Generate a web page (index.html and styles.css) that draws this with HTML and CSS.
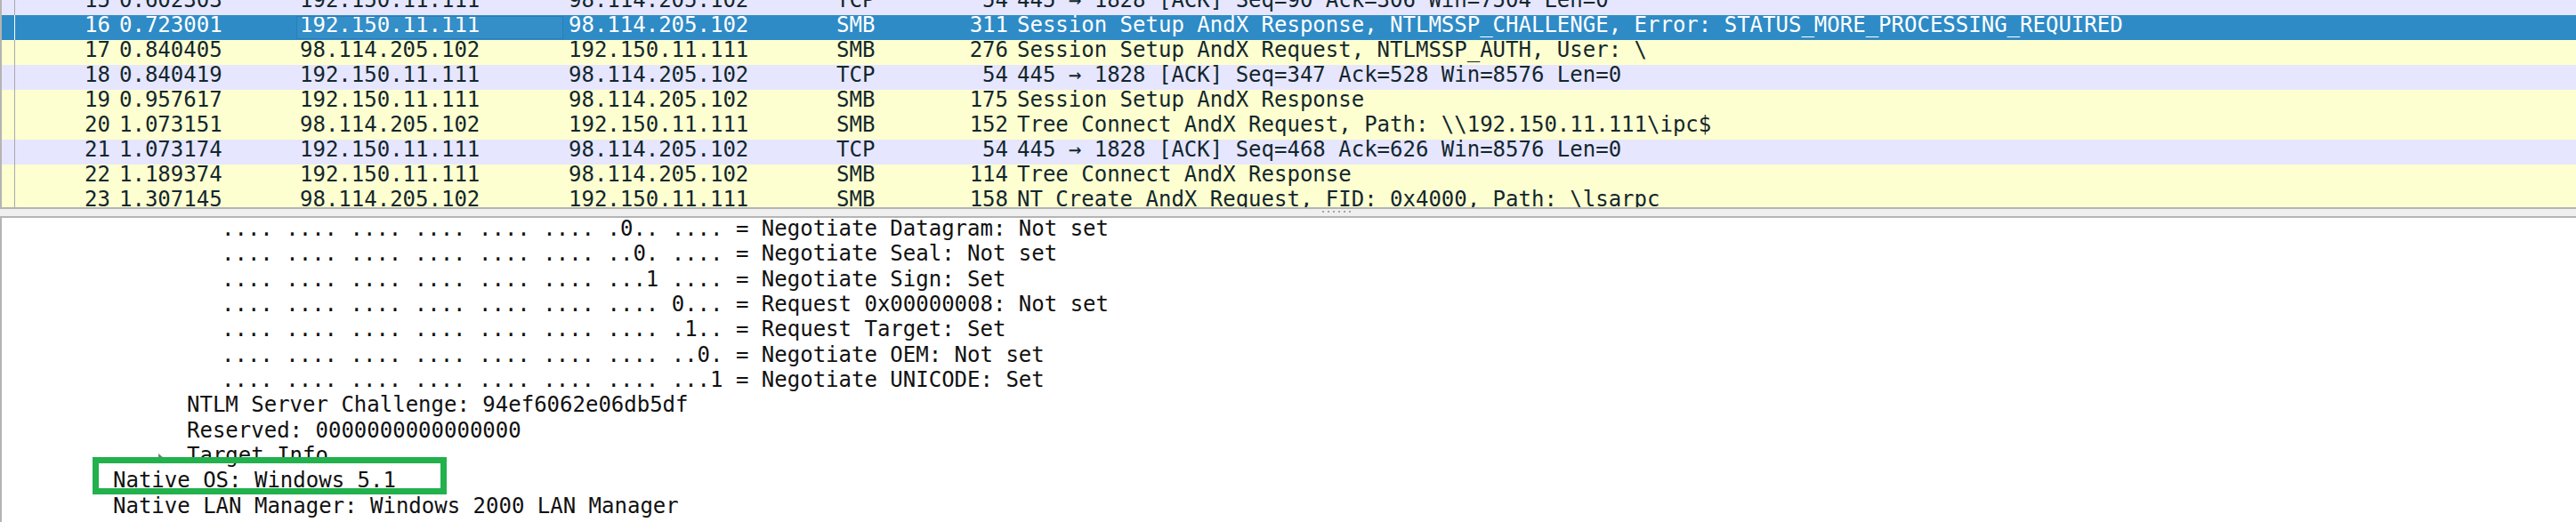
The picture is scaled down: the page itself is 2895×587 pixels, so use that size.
FILE: index.html
```html
<!DOCTYPE html>
<html>
<head>
<meta charset="utf-8">
<link rel="stylesheet" href="styles.css">
</head>
<body>
<div class="app">
  <div class="plist">
    <div class="rows">
      <div class="row tcp"><div class="c ind"></div><div class="c no">15</div><div class="c time">0.602303</div><div class="c src">192.150.11.111</div><div class="c dst">98.114.205.102</div><div class="c proto">TCP</div><div class="c len">54</div><div class="c info">445 → 1828 [ACK] Seq=90 Ack=306 Win=7504 Len=0</div></div>
      <div class="row sel"><div class="c ind"></div><div class="c no">16</div><div class="c time">0.723001</div><div class="c src focus">192.150.11.111</div><div class="c dst">98.114.205.102</div><div class="c proto">SMB</div><div class="c len">311</div><div class="c info">Session Setup AndX Response, NTLMSSP_CHALLENGE, Error: STATUS_MORE_PROCESSING_REQUIRED</div></div>
      <div class="row smb"><div class="c ind"></div><div class="c no">17</div><div class="c time">0.840405</div><div class="c src">98.114.205.102</div><div class="c dst">192.150.11.111</div><div class="c proto">SMB</div><div class="c len">276</div><div class="c info">Session Setup AndX Request, NTLMSSP_AUTH, User: \</div></div>
      <div class="row tcp"><div class="c ind"></div><div class="c no">18</div><div class="c time">0.840419</div><div class="c src">192.150.11.111</div><div class="c dst">98.114.205.102</div><div class="c proto">TCP</div><div class="c len">54</div><div class="c info">445 → 1828 [ACK] Seq=347 Ack=528 Win=8576 Len=0</div></div>
      <div class="row smb"><div class="c ind"></div><div class="c no">19</div><div class="c time">0.957617</div><div class="c src">192.150.11.111</div><div class="c dst">98.114.205.102</div><div class="c proto">SMB</div><div class="c len">175</div><div class="c info">Session Setup AndX Response</div></div>
      <div class="row smb"><div class="c ind"></div><div class="c no">20</div><div class="c time">1.073151</div><div class="c src">98.114.205.102</div><div class="c dst">192.150.11.111</div><div class="c proto">SMB</div><div class="c len">152</div><div class="c info">Tree Connect AndX Request, Path: \\192.150.11.111\ipc$</div></div>
      <div class="row tcp"><div class="c ind"></div><div class="c no">21</div><div class="c time">1.073174</div><div class="c src">192.150.11.111</div><div class="c dst">98.114.205.102</div><div class="c proto">TCP</div><div class="c len">54</div><div class="c info">445 → 1828 [ACK] Seq=468 Ack=626 Win=8576 Len=0</div></div>
      <div class="row smb"><div class="c ind"></div><div class="c no">22</div><div class="c time">1.189374</div><div class="c src">192.150.11.111</div><div class="c dst">98.114.205.102</div><div class="c proto">SMB</div><div class="c len">114</div><div class="c info">Tree Connect AndX Response</div></div>
      <div class="row smb"><div class="c ind"></div><div class="c no">23</div><div class="c time">1.307145</div><div class="c src">98.114.205.102</div><div class="c dst">192.150.11.111</div><div class="c proto">SMB</div><div class="c len">158</div><div class="c info">NT Create AndX Request, FID: 0x4000, Path: \lsarpc</div></div>
    </div>
  </div>
  <div class="splitter"><span class="grip"></span></div>
  <div class="details">
    <div class="tree">
      <div class="ln l3">.... .... .... .... .... .... .0.. .... = Negotiate Datagram: Not set</div>
      <div class="ln l3">.... .... .... .... .... .... ..0. .... = Negotiate Seal: Not set</div>
      <div class="ln l3">.... .... .... .... .... .... ...1 .... = Negotiate Sign: Set</div>
      <div class="ln l3">.... .... .... .... .... .... .... 0... = Request 0x00000008: Not set</div>
      <div class="ln l3">.... .... .... .... .... .... .... .1.. = Request Target: Set</div>
      <div class="ln l3">.... .... .... .... .... .... .... ..0. = Negotiate OEM: Not set</div>
      <div class="ln l3">.... .... .... .... .... .... .... ...1 = Negotiate UNICODE: Set</div>
      <div class="ln l2">NTLM Server Challenge: 94ef6062e06db5df</div>
      <div class="ln l2">Reserved: 0000000000000000</div>
      <div class="ln l2 exp"><span class="arrow"></span>Target Info</div>
      <div class="ln l0">Native OS: Windows 5.1</div>
      <div class="ln l0">Native LAN Manager: Windows 2000 LAN Manager</div>
    </div>
    <div class="highlight"></div>
  </div>
</div>
</body>
</html>
```
FILE: styles.css
```css
html, body {
  margin: 0;
  padding: 0;
  background: #ffffff;
}
.app {
  width: 2895px;
  height: 587px;
  overflow: hidden;
  display: flex;
  flex-direction: column;
  font-family: "DejaVu Sans Mono", monospace;
  font-size: 24px;
}
.plist {
  height: 233px;
  flex: none;
  overflow: hidden;
  border-left: 2px solid #b4b4b4;
  border-bottom: 2px solid #b4b4b4;
}
.rows {
  margin-top: -11px;
}
.row {
  display: flex;
  height: 28px;
  line-height: 23px;
  color: #12272e;
  white-space: pre;
}
.row.tcp { background: #e7e6ff; }
.row.smb { background: #feffd0; }
.row.sel { background: #2e8bc6; color: #ffffff; }
.c {
  flex: none;
  box-sizing: border-box;
  padding: 0 5px;
  overflow: visible;
}
.ind {
  width: 15px;
  height: 28px;
  padding: 0;
  border-right: 1px solid #a8a8b0;
}
.row.sel .ind { border-right-color: #ffffff; }
.no { width: 112px; text-align: right; }
.time { width: 203px; }
.src { width: 302px; position: relative; }
.dst { width: 301px; }
.proto { width: 105px; }
.len { width: 98px; text-align: right; }
.info { flex: 1; }
.focus::before {
  content: "";
  position: absolute;
  left: 1px;
  right: 1px;
  top: 1px;
  height: 26px;
  box-sizing: border-box;
  border: 1px solid #2a7fb6;
  background: rgba(255, 255, 255, 0.03);
}
.splitter {
  height: 8px;
  flex: none;
  background: #efefef;
  border-bottom: 2px solid #b4b4b4;
  position: relative;
}
.grip {
  position: absolute;
  left: 1486px;
  top: 2px;
  width: 32px;
  height: 2px;
  background: repeating-linear-gradient(to right, #a4a4a4 0 2px, transparent 2px 6px);
}
.details {
  flex: 1;
  position: relative;
  overflow: hidden;
  border-left: 2px solid #b4b4b4;
  color: #111111;
}
.tree {
  margin-top: -2px;
}
.ln {
  height: 28.33px;
  line-height: 28.33px;
  white-space: pre;
  position: relative;
}
.l0 { padding-left: 125px; }
.l2 { padding-left: 208px; }
.l3 { padding-left: 247px; }
.arrow {
  position: absolute;
  left: 176px;
  top: 12px;
  width: 0;
  height: 0;
  border-top: 5px solid transparent;
  border-bottom: 5px solid transparent;
  border-left: 6px solid #7a7a7a;
}
.highlight {
  position: absolute;
  left: 102px;
  top: 269px;
  width: 398px;
  height: 42px;
  box-sizing: border-box;
  border: 7px solid #22b14c;
}
```
